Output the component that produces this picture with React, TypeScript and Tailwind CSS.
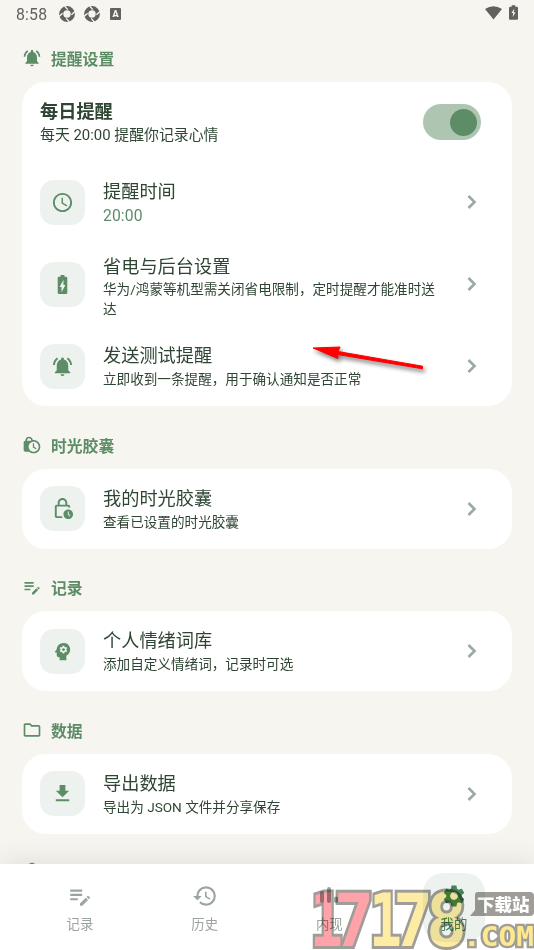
import type { ReactNode } from "react";
import {
  MdAccessTime,
  MdBatteryChargingFull,
  MdEditNote,
  MdDownload,
  MdHistory,
  MdLockClock,
  MdNotificationsActive,
  MdOutlineFolder,
  MdOutlineLock,
  MdOutlineLockClock,
  MdPsychology,
  MdSettings,
} from "react-icons/md";

type SectionProps = {
  icon: ReactNode;
  title?: string;
  children?: ReactNode;
};

function Section({ icon, title, children }: SectionProps) {
  return (
    <section className="mb-[27.5px]">
      <h2 className="flex h-6 gap-[9px] text-[15.8px] font-bold leading-6 text-[#5c8d66]">
        <span className="mt-px size-5 text-[20px]">{icon}</span>
        <span className="pt-px">{title}</span>
      </h2>
      <div className="mt-[11px] rounded-[24px] bg-white">{children}</div>
    </section>
  );
}

type RowProps = {
  icon: ReactNode;
  title: string;
  detail: string;
  accent?: boolean;
  tall?: boolean;
};

function Row({ icon, title, detail, accent = false, tall = false }: RowProps) {
  return (
    <div className={tall ? "flex h-[84px] items-center px-[18px]" : "flex h-20 items-center px-[18px]"}>
      <div className="grid size-[45px] shrink-0 place-items-center rounded-[14px] bg-[#edf2ef] text-[23px] text-[#5c8d66]">
        {icon}
      </div>
      <div className={tall ? "ml-[18px] w-[337px] pt-[6px]" : "ml-[18px] w-[337px]"}>
        <div className={tall ? "text-[18.2px] font-[390] leading-[24px] text-[#2f4533]" : "text-[18.2px] font-[390] leading-[26px] text-[#2f4533]"}>
          {title}
        </div>
        <div className={accent ? "text-[15.7px] leading-[21px] tracking-[0.1px] text-[#5c8d66]" : "text-[13.6px] font-[390] leading-[20px] text-[#2f4533]"}>
          {detail}
        </div>
      </div>
      <svg viewBox="0 0 26 26" className="ml-[19px] size-[26px] shrink-0" fill="none" stroke="#9aaaa0" strokeWidth="2.6">
        <path d="M9.500 7 15.500 13 9.500 19" />
      </svg>
    </div>
  );
}

function Tab({ icon, label, active = false }: { icon: ReactNode; label: string; active?: boolean }) {
  return (
    <div className={active ? "flex h-[69px] w-[62px] flex-col items-center rounded-[20px] bg-[#edf2ef] pt-[10px] text-[#438355]" : "flex h-[69px] w-[62px] flex-col items-center pt-[10px] text-[#9ba59f]"}>
      <span className="grid h-[26px] place-items-center text-[26px]">{icon}</span>
      <span className="mt-[5px] text-[13.4px] font-[390] leading-[22px]">{label}</span>
    </div>
  );
}

function ApertureIcon() {
  return (
    <svg viewBox="0 0 16 16" className="size-4">
      <circle cx="8" cy="8" r="5.8" fill="none" stroke="#62615f" strokeWidth="4.200" />
      <path d="M5.600 0 8.800 3.600M16 5.600 12.400 8.800M10.400 16 7.200 12.400M0 10.400 3.600 7.200" stroke="#f7f5f0" strokeWidth="1.3" />
    </svg>
  );
}

function StatusBar() {
  return (
    <div className="flex h-7 items-center pl-4 pr-[16px] text-[#62615f]">
      <span className="w-[43px] pt-px text-[15.8px] tracking-[0.2px]">8:58</span>
      <div className="flex items-center gap-[9px]">
        <ApertureIcon />
        <ApertureIcon />
        <span className="ml-px grid h-3 w-[11px] place-items-center rounded-[1px] bg-[#62615f] text-[9px] font-black leading-none text-[#f7f5f0]">A</span>
      </div>
      <svg viewBox="0 0 17 14" className="mb-[2px] ml-auto h-[14px] w-[17px]">
        <path d="M0 3Q8.500-2.600 17 3L8.500 13.500Z" fill="currentColor" />
      </svg>
      <svg viewBox="0 0 10 16" className="mb-[3px] ml-[7px] h-[15px] w-[9px]">
        <path d="M3 0h4v1.500h2l1 1V15q0 1-1 1H1q-1 0-1-1V2.500l1-1h2Z" fill="currentColor" />
        <path d="M6 3.500 2.700 8.500h2L4 13l3.300-5h-2Z" fill="#f7f5f0" />
      </svg>
    </div>
  );
}

function Arrow() {
  return (
    <svg viewBox="0 0 120 36" className="absolute left-[310px] top-[340px] h-9 w-[120px] drop-shadow-[2px_3px_2px_rgba(0,0,0,0.5)]">
      <path d="M3 8 30 7 28 11.500 112.500 26.200V28.800L27.500 14.500 28 18.500Z" fill="#fe0000" stroke="#fe0000" strokeLinejoin="round" />
    </svg>
  );
}

const digits = [
  { char: "1", x: 0, width: 33, fill: "#ff8b94" },
  { char: "7", x: 24, width: 40, fill: "#ff8b94" },
  { char: "1", x: 59, width: 33, fill: "#ffe88d" },
  { char: "7", x: 83, width: 40, fill: "#ffe88d" },
  { char: "8", x: 116, width: 41, fill: "#ffe88d" },
];

function Watermark() {
  return (
    <svg viewBox="0 0 224 64" className="absolute left-[310px] top-[886px] h-16 w-56 opacity-80 mix-blend-multiply">
      <g fontFamily="DejaVu Sans Mono" fontWeight="bold" fontSize="73" stroke="#88857f" strokeWidth="6" paintOrder="stroke">
        {digits.map(({ char, x, width, fill }) => (
          <text key={x} x={x} y="60" textLength={width} lengthAdjust="spacingAndGlyphs" fill={fill}>
            {char}
          </text>
        ))}
      </g>
      <path d="M168 6h52q4 0 4 4v16q0 4-4 4h-60l5-6V9q0-3 3-3Z" fill="#88857f" />
      <text x="167" y="24.500" fontFamily="Noto Sans CJK SC" fontWeight="900" fontSize="17.5" fill="#fff">
        下载站
      </text>
      <text
        x="153"
        y="60"
        fontFamily="DejaVu Sans Mono"
        fontWeight="bold"
        fontSize="27"
        textLength="71"
        lengthAdjust="spacingAndGlyphs"
        stroke="#88857f"
        strokeWidth="4.5"
        paintOrder="stroke"
        fill="#ffe473"
      >
        .COM
      </text>
    </svg>
  );
}

export default function App() {
  return (
    <div className="relative flex h-[950px] w-[534px] flex-col overflow-hidden bg-[#f7f5f0] font-['Roboto','Noto_Sans_CJK_SC',sans-serif]">
      <StatusBar />
      <main className="min-h-0 flex-1 overflow-hidden px-[22px] pt-[19.3px]">
        <Section icon={<MdNotificationsActive />} title="提醒设置">
          <div className="flex h-20 items-center justify-between pl-[18px] pr-[31px]">
            <div className="text-[#2f4533]">
              <div className="pt-px text-[18.2px] font-bold leading-[25px]">每日提醒</div>
              <div className="text-[14.9px] font-[390] leading-[22px]">每天 20:00 提醒你记录心情</div>
            </div>
            <div className="flex h-[36px] w-[58px] items-center justify-end rounded-full bg-[#aec5b2] pr-[4px]">
              <div className="size-[27px] rounded-full bg-[#5c8d66]" />
            </div>
          </div>
          <Row icon={<MdAccessTime />} title="提醒时间" detail="20:00" accent />
          <Row icon={<MdBatteryChargingFull />} title="省电与后台设置" detail="华为/鸿蒙等机型需关闭省电限制，定时提醒才能准时送达" tall />
          <Row icon={<MdNotificationsActive />} title="发送测试提醒" detail="立即收到一条提醒，用于确认通知是否正常" />
        </Section>
        <Section icon={<MdLockClock />} title="时光胶囊">
          <Row icon={<MdOutlineLockClock />} title="我的时光胶囊" detail="查看已设置的时光胶囊" />
        </Section>
        <Section icon={<MdEditNote />} title="记录">
          <Row icon={<MdPsychology />} title="个人情绪词库" detail="添加自定义情绪词，记录时可选" />
        </Section>
        <Section icon={<MdOutlineFolder />} title="数据">
          <Row icon={<MdDownload />} title="导出数据" detail="导出为 JSON 文件并分享保存" />
        </Section>
        <Section icon={<MdOutlineLock />} />
      </main>
      <nav className="flex h-[86px] shrink-0 justify-between bg-white px-[49px] pt-[9px] shadow-[0_-4px_24px_rgba(50,60,40,0.1)]">
        <Tab icon={<MdEditNote />} label="记录" />
        <Tab icon={<MdHistory />} label="历史" />
        <Tab
          icon={
            <svg viewBox="0 0 24 24" className="size-6" stroke="currentColor" strokeWidth="4" strokeLinecap="round">
              <path d="M5 9v8M12 5v12M19 14.500v2.500" />
            </svg>
          }
          label="内现"
        />
        <Tab icon={<MdSettings />} label="我的" active />
      </nav>
      <Arrow />
      <Watermark />
    </div>
  );
}
